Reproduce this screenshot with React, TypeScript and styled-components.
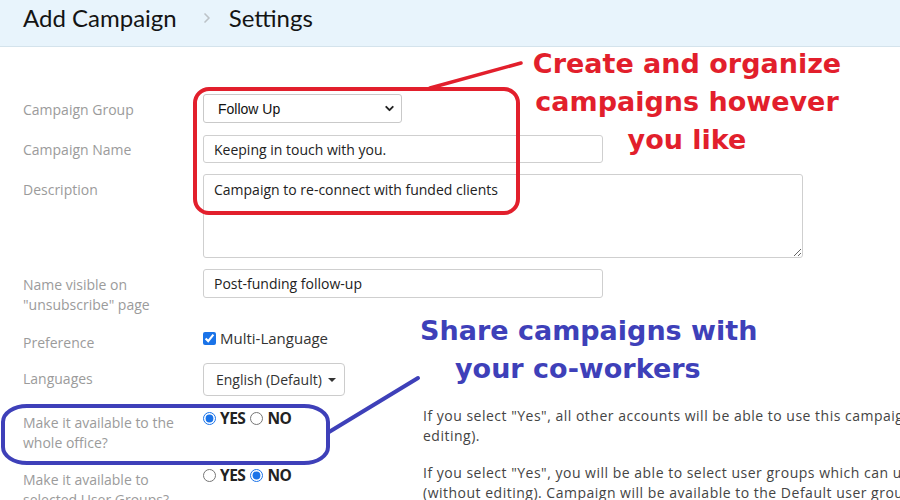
import React from "react";
import styled, { createGlobalStyle } from "styled-components";
import { ChevronDown, ChevronRight } from "lucide-react";

const GlobalStyle = createGlobalStyle`
  html, body {
    margin: 0;
    padding: 0;
    width: 900px;
    height: 500px;
    overflow: hidden;
    background: #fff;
  }
  body {
    font-family: "Open Sans", Lato, sans-serif;
  }
`;

const Page = styled.div`
  position: relative;
  width: 900px;
  height: 500px;
  overflow: hidden;
`;

const Header = styled.div`
  height: 47px;
  box-sizing: border-box;
  background: #e8f4fc;
  border-bottom: 1px solid #d4e3ec;
  display: flex;
  align-items: flex-start;
  padding: 3px 0 0 23px;
  font-family: Lato, sans-serif;
  font-size: 24px;
  line-height: 30px;
  color: #141414;
`;

const Crumb = styled.span``;

const CrumbSep = styled.span`
  display: flex;
  align-items: center;
  height: 30px;
  margin: 0 14px 0 22px;
  color: #bcc2c7;
`;

const Form = styled.div`
  display: flex;
  flex-direction: column;
  padding: 47px 0 0 23px;
`;

const Row = styled.div<{ $mb?: number }>`
  display: flex;
  align-items: flex-start;
  margin-bottom: ${(p) => p.$mb ?? 11}px;
`;

const Label = styled.div<{ $pt?: number }>`
  width: 180px;
  flex-shrink: 0;
  padding-top: ${(p) => p.$pt ?? 6}px;
  font-size: 14px;
  line-height: 20px;
  color: #9b9b9b;
`;

const Field = styled.div<{ $pt?: number }>`
  display: flex;
  align-items: flex-start;
  padding-top: ${(p) => p.$pt ?? 0}px;
`;

const SelectBox = styled.div`
  width: 199px;
  height: 29px;
  box-sizing: border-box;
  border: 1px solid #c9c9c9;
  border-radius: 3px;
  display: flex;
  align-items: center;
  justify-content: space-between;
  padding: 0 5px 0 14px;
  font-family: "Liberation Sans", Arial, sans-serif;
  font-size: 14px;
  color: #111;
`;

const TextInput = styled.input<{ $w: number; $h?: number }>`
  width: ${(p) => p.$w}px;
  height: ${(p) => p.$h ?? 28}px;
  box-sizing: border-box;
  border: 1px solid #cfcfcf;
  border-radius: 3px;
  padding: 0 10px;
  font-family: "Open Sans", Lato, sans-serif;
  font-size: 14px;
  color: #222;
  outline: none;
  margin: 0;
`;

const TextArea = styled.textarea`
  width: 600px;
  height: 84px;
  box-sizing: border-box;
  border: 1px solid #cfcfcf;
  border-radius: 3px;
  padding: 5px 10px;
  font-family: "Open Sans", Lato, sans-serif;
  font-size: 14px;
  line-height: 20px;
  color: #222;
  outline: none;
  margin: 0;
`;

const CheckLabel = styled.label`
  display: flex;
  align-items: center;
  gap: 4px;
  font-size: 15px;
  line-height: 20px;
  color: #333;
`;

const Check = styled.input`
  margin: 0;
  width: 13px;
  height: 13px;
  accent-color: #1a73e8;
`;

const DropButton = styled.div`
  height: 33px;
  box-sizing: border-box;
  border: 1px solid #cccccc;
  border-radius: 4px;
  display: flex;
  align-items: center;
  gap: 6px;
  padding: 0 8px 0 12px;
  font-size: 14px;
  color: #333;
`;

const Caret = styled.span`
  width: 0;
  height: 0;
  border-left: 4px solid transparent;
  border-right: 4px solid transparent;
  border-top: 4px solid #333;
`;

const RadioGroup = styled.div`
  width: 220px;
  flex-shrink: 0;
  display: flex;
  align-items: center;
  padding-top: 3px;
  line-height: 16px;
`;

const RadioOption = styled.label`
  display: flex;
  align-items: center;
  gap: 4px;
  margin-right: 5px;
  font-size: 15.5px;
  font-weight: 700;
  letter-spacing: -0.5px;
  color: #222;
`;

const Radio = styled.input`
  margin: 0;
  width: 13px;
  height: 13px;
  accent-color: #1a73e8;
`;

const Help = styled.div`
  width: 604px;
  flex-shrink: 0;
  margin-top: -1px;
  font-size: 14px;
  letter-spacing: 0.5px;
  line-height: 20px;
  color: #444;
`;

const Overlay = styled.svg`
  position: absolute;
  left: 0;
  top: 0;
  pointer-events: none;
`;

const Note = styled.div<{ $x: number; $y: number; $w: number; $color: string; $align: string }>`
  position: absolute;
  left: ${(p) => p.$x}px;
  top: ${(p) => p.$y}px;
  width: ${(p) => p.$w}px;
  text-align: ${(p) => p.$align};
  font-family: "DejaVu Sans", sans-serif;
  font-weight: 700;
  font-size: 27px;
  line-height: 38px;
  color: ${(p) => p.$color};
  white-space: nowrap;
`;

const NoteLine = styled.div<{ $indent?: number }>`
  padding-left: ${(p) => p.$indent ?? 0}px;
`;

const RED = "#e21f2c";
const BLUE = "#3e40b9";

export default function App() {
  return (
    <Page>
      <GlobalStyle />
      <Header>
        <Crumb>Add Campaign</Crumb>
        <CrumbSep>
          <ChevronRight size={16} strokeWidth={2.5} />
        </CrumbSep>
        <Crumb>Settings</Crumb>
      </Header>

      <Form>
        <Row $mb={12}>
          <Label>Campaign Group</Label>
          <Field>
            <SelectBox>
              <span>Follow Up</span>
              <ChevronDown size={13} strokeWidth={3.5} color="#222" />
            </SelectBox>
          </Field>
        </Row>
        <Row>
          <Label $pt={5}>Campaign Name</Label>
          <Field>
            <TextInput $w={400} readOnly value="Keeping in touch with you." />
          </Field>
        </Row>
        <Row>
          <Label>Description</Label>
          <Field>
            <TextArea readOnly value="Campaign to re-connect with funded clients" />
          </Field>
        </Row>
        <Row $mb={12}>
          <Label>
            Name visible on
            <br />
            "unsubscribe" page
          </Label>
          <Field>
            <TextInput $w={400} $h={29} readOnly value="Post-funding follow-up" />
          </Field>
        </Row>
        <Row $mb={10}>
          <Label>Preference</Label>
          <Field $pt={1}>
            <CheckLabel>
              <Check type="checkbox" defaultChecked />
              Multi-Language
            </CheckLabel>
          </Field>
        </Row>
        <Row>
          <Label>Languages</Label>
          <Field>
            <DropButton>
              English (Default)
              <Caret />
            </DropButton>
          </Field>
        </Row>
        <Row>
          <Label>
            Make it available to the
            <br />
            whole office?
          </Label>
          <Field>
            <RadioGroup>
              <RadioOption>
                <Radio type="radio" name="office" defaultChecked />
                YES
              </RadioOption>
              <RadioOption>
                <Radio type="radio" name="office" />
                NO
              </RadioOption>
            </RadioGroup>
            <Help>
              If you select "Yes", all other accounts will be able to use this campaign (without
              editing).
            </Help>
          </Field>
        </Row>
        <Row>
          <Label>
            Make it available to
            <br />
            selected User Groups?
          </Label>
          <Field>
            <RadioGroup>
              <RadioOption>
                <Radio type="radio" name="groups" />
                YES
              </RadioOption>
              <RadioOption>
                <Radio type="radio" name="groups" defaultChecked />
                NO
              </RadioOption>
            </RadioGroup>
            <Help>
              If you select "Yes", you will be able to select user groups which can use this
              campaign (without editing). Campaign will be available to the Default user group.
            </Help>
          </Field>
        </Row>
      </Form>

      <Overlay width={900} height={500} viewBox="0 0 900 500">
        <rect x={195} y={89} width={323} height={124} rx={14} fill="none" stroke={RED} strokeWidth={4} />
        <line x1={430} y1={88} x2={521} y2={63} stroke={RED} strokeWidth={3.5} strokeLinecap="round" />
        <rect x={3} y={406} width={325} height={57} rx={24} ry={16} fill="none" stroke={BLUE} strokeWidth={4} />
        <line x1={329} y1={432} x2={418} y2={378} stroke={BLUE} strokeWidth={4} strokeLinecap="round" />
      </Overlay>

      <Note $x={517} $y={45} $w={340} $color={RED} $align="center">
        <NoteLine>Create and organize</NoteLine>
        <NoteLine>campaigns however</NoteLine>
        <NoteLine>you like</NoteLine>
      </Note>

      <Note $x={420} $y={312} $w={440} $color={BLUE} $align="left">
        <NoteLine>Share campaigns with</NoteLine>
        <NoteLine $indent={35}>your co-workers</NoteLine>
      </Note>
    </Page>
  );
}
